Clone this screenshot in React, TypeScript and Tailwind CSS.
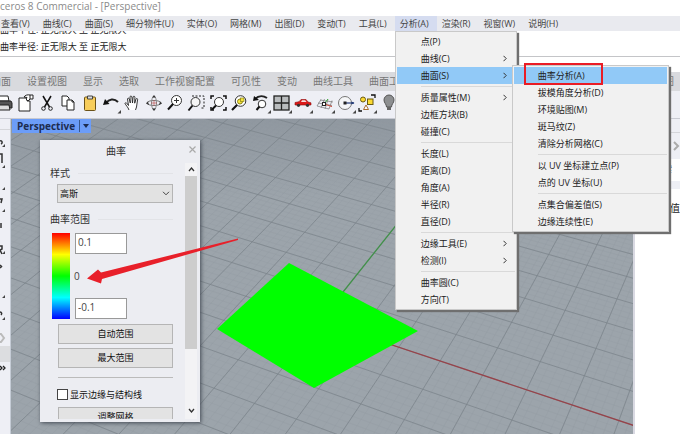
import { Fragment, type ReactNode } from "react";
import { clsx } from "clsx";

type MenuEntry = { label: string; sub?: boolean; children?: MenuEntry[][]; marked?: boolean };

const MENUS = [
  "查看(V)", "曲线(C)", "曲面(S)", "细分物件(U)", "实体(O)", "网格(M)", "出图(D)",
  "变动(T)", "工具(L)", "分析(A)", "渲染(R)", "视窗(W)", "说明(H)",
];

const SURFACE_MENU: MenuEntry[][] = [
  [
    { label: "曲率分析(A)", marked: true },
    { label: "拔模角度分析(D)" },
    { label: "环境贴图(M)" },
    { label: "斑马纹(Z)" },
    { label: "清除分析网格(C)" },
  ],
  [{ label: "以 UV 坐标建立点(P)" }, { label: "点的 UV 坐标(U)" }],
  [{ label: "点集合偏差值(S)" }, { label: "边缘连续性(E)" }],
];

const ANALYZE_MENU: MenuEntry[][] = [
  [{ label: "点(P)" }, { label: "曲线(C)", sub: true }, { label: "曲面(S)", sub: true, children: SURFACE_MENU }],
  [{ label: "质量属性(M)", sub: true }, { label: "边框方块(B)" }, { label: "碰撞(C)" }],
  [{ label: "长度(L)" }, { label: "距离(D)" }, { label: "角度(A)" }, { label: "半径(R)" }, { label: "直径(D)" }],
  [{ label: "边缘工具(E)", sub: true }, { label: "检测(I)", sub: true }],
  [{ label: "曲率圆(C)" }, { label: "方向(T)" }],
];

const TABS = ["曲面", "设置视图", "显示", "选取", "工作视窗配置", "可见性", "变动", "曲线工具", "曲面工具"];

function Menu({ groups, className }: { groups: MenuEntry[][]; className: string }) {
  return (
    <div
      role="menu"
      className={clsx(
        "absolute z-20 border border-[#c9c9c9] bg-[#f1f1f1] p-px shadow-[2px_2px_1px_#6f6f6f]",
        className
      )}
    >
      {groups.map((group, i) => (
        <Fragment key={i}>
          {i > 0 && <div className="my-[2px] ml-6 h-px bg-[#d9d9d9]" />}
          {group.map((item) => (
            <div key={item.label} className="relative">
              <button
                role="menuitem"
                className={clsx(
                  "flex h-[17px] w-full items-center justify-between pr-2 pl-6 whitespace-nowrap text-[#222]",
                  (item.children || item.marked) && "bg-[#91c9f7]"
                )}
              >
                {item.label}
                {item.sub && (
                  <svg width="4" height="7" viewBox="0 0 4 7" fill="none" stroke="#333">
                    <path d="M.5 .8 3.2 3.5 .5 6.2" />
                  </svg>
                )}
              </button>
              {item.marked && (
                <div className="pointer-events-none absolute -top-[4px] left-[10px] h-[22px] w-[79px] border-2 border-[#ea1c25]" />
              )}
              {item.children && <Menu groups={item.children} className="-top-[2px] left-[115px] w-[157px]" />}
            </div>
          ))}
        </Fragment>
      ))}
    </div>
  );
}

/* Toolbar icons, all on a 20x20 grid */
const TOOLS: { name: string; flyout?: boolean; icon: ReactNode }[] = [
  {
    name: "Print",
    icon: (
      <>
        <path d="M5 3h9l1 5H4z" fill="#fff" stroke="#222" />
        <path d="M2 8h15l1 2v5H2z" fill="#555" stroke="#222" />
        <path d="M5 12h10l1 5H4z" fill="#ddd" stroke="#222" />
      </>
    ),
  },
  {
    name: "Properties",
    icon: (
      <>
        <path d="M4 5h8v3h3v10H4z" fill="#fff" stroke="#222" />
        <path d="M9 4c1-2 4-2.500 6-2h3v4h-3l-2 2-2-2 1-1.500z" fill="#fff" stroke="#222" />
        <path d="M15 2v4" stroke="#222" />
      </>
    ),
  },
  {
    name: "Cut",
    icon: (
      <>
        <path d="M6 3l6.500 11M14 3 7.500 14" stroke="#111" strokeWidth="1.500" />
        <circle cx="6.500" cy="15.500" r="1.800" stroke="#222" />
        <circle cx="13.500" cy="15.500" r="1.800" stroke="#222" />
      </>
    ),
  },
  {
    name: "Copy",
    icon: (
      <>
        <path d="M4 3h5l2 2v8H4z" fill="#fff" stroke="#222" />
        <path d="M9 7h5l2 2v8H9z" fill="#fff" stroke="#222" />
        <path d="M14 7v2h2" stroke="#222" />
      </>
    ),
  },
  {
    name: "Paste",
    icon: (
      <>
        <rect x="4.500" y="4" width="11" height="13.500" rx="1" fill="#f7cd5b" stroke="#6b5219" />
        <path d="M7.500 3h5v3h-5z" fill="#ddd" stroke="#444" />
      </>
    ),
  },
  {
    name: "Undo",
    flyout: true,
    icon: (
      <>
        <path d="M5 10c3-4 8-5 12-1" stroke="#222" strokeWidth="2" />
        <path d="M2 12 4 6l4.500 5z" fill="#111" />
      </>
    ),
  },
  {
    name: "Pan",
    icon: (
      <path
        d="M7 17c-1-3-3-4.500-4-6.500 0-1 1.500-1 2 0l1.500 2L5.500 6c0-1 1.500-1.300 1.800 0l1 4L8 4c0-1.300 1.700-1.300 1.900 0l.6 6 .6-6c.2-1.200 1.700-1 1.800.2l-.2 6 1.300-4.200c.5-1 1.800-.5 1.600.5L14.500 14l-1 3"
        fill="#fff"
        stroke="#222"
        strokeWidth=".9"
      />
    ),
  },
  {
    name: "Rotate View",
    icon: (
      <>
        <ellipse cx="10" cy="10" rx="7" ry="2.500" stroke="#777" />
        <ellipse cx="10" cy="10" rx="2.500" ry="6.500" stroke="#888" />
        <path d="M8 4.500 10 2l2 2.500zM8 15.500l2 2.500 2-2.500zM4 8.500 2 10.500l3 1.500zM16 8.500l2 2-3 1.500z" fill="#333" />
        <path d="M10 7v6M7 10h6" stroke="#b55" strokeWidth=".7" />
      </>
    ),
  },
  {
    name: "Zoom Dynamic",
    icon: (
      <>
        <circle cx="11.500" cy="7.500" r="5" fill="#fff" stroke="#333" />
        <path d="M9 7.500h5M11.500 5v5" stroke="#333" />
        <path d="m8 11-5 5.500" stroke="#111" strokeWidth="2" />
      </>
    ),
  },
  {
    name: "Zoom Window",
    icon: (
      <>
        <path d="M6 3h12v12h-3" stroke="#222" strokeDasharray="2 1.500" />
        <circle cx="9.500" cy="9" r="4.500" fill="#f5f5f5" stroke="#333" />
        <path d="m6.500 12.500-4 5" stroke="#111" strokeWidth="2" />
      </>
    ),
  },
  {
    name: "Zoom Extents",
    icon: (
      <>
        <path d="M3 6V3h3M15 3h3v3M18 14v3h-3M6 17H3v-3" stroke="#111" strokeWidth="1.500" />
        <circle cx="11" cy="9" r="4.500" fill="#fff" stroke="#333" />
        <path d="m8 12.500-4 4" stroke="#111" strokeWidth="2" />
      </>
    ),
  },
  {
    name: "Zoom Selected",
    icon: (
      <>
        <circle cx="11.500" cy="8" r="5.300" fill="#fff" stroke="#333" />
        <circle cx="11" cy="8.500" r="2.500" fill="#f5e53c" stroke="#8a8018" />
        <rect x="11.500" y="5" width="3.500" height="3.500" fill="#f5e53c" stroke="#8a8018" strokeWidth=".7" />
        <path d="m8 12-5 5" stroke="#111" strokeWidth="2.200" />
      </>
    ),
  },
  {
    name: "Undo View Change",
    flyout: true,
    icon: (
      <>
        <path d="M4 6c4-4 9-3 12-1" stroke="#222" strokeWidth="2" />
        <path d="M2 8 3 3l5 4z" fill="#111" />
        <circle cx="11" cy="11" r="3.800" fill="#fff" stroke="#333" />
        <path d="m8.500 13.500-3 3.500" stroke="#111" strokeWidth="2" />
      </>
    ),
  },
  {
    name: "4 Viewports",
    flyout: true,
    icon: (
      <>
        <rect x="2" y="3" width="15" height="14" fill="#b9bcbe" stroke="#222" strokeWidth="1.300" />
        <path d="M9.500 3v14M2 10h15" stroke="#222" strokeWidth="1.300" />
      </>
    ),
  },
  {
    name: "Named Views",
    flyout: true,
    icon: (
      <>
        <path d="M2 12V9.500l4-.8 2-2.200h5l2 2.500 3 .8V12z" fill="#dc1919" stroke="#8e0c0c" strokeWidth=".6" />
        <path d="M8 9l1-1.700h3.200L13.500 9z" fill="#f3dede" />
        <circle cx="5.500" cy="12.300" r="1.600" fill="#333" />
        <circle cx="14.500" cy="12.300" r="1.600" fill="#333" />
      </>
    ),
  },
  {
    name: "Set CPlane",
    flyout: true,
    icon: (
      <>
        <path d="M6 6.500 2 13M9.500 6 6 15M13 6.500 10 16M17 7.500l-3 8.500M5 7l13 2M3 10l14 2.500M2 13l12 3" stroke="#777" strokeWidth=".7" />
        <path d="m9 11 8 2.500" stroke="#c43" />
        <path d="m9 11 4-5" stroke="#3a3" />
        <rect x="7.500" y="9.500" width="3" height="3" fill="#fff" stroke="#222" />
      </>
    ),
  },
  {
    name: "Object Snap",
    flyout: true,
    icon: (
      <>
        <circle cx="9" cy="10" r="6.500" fill="#f5f6f8" stroke="#777" />
        <path d="M9 10h9" stroke="#223a77" strokeWidth="1.200" />
        <rect x="7.500" y="8.500" width="3" height="3" fill="#222" />
        <path d="m15.500 8.500 3 1.500-3 1.500z" fill="#223a77" />
      </>
    ),
  },
  {
    name: "Select",
    flyout: true,
    icon: (
      <>
        <path d="M14 2h4v3M2 15v3h3" stroke="#111" strokeWidth="1.300" />
        <circle cx="6" cy="6.500" r="2.500" fill="#fbd932" stroke="#6b5b13" />
        <rect x="10.500" y="6" width="5.500" height="5.500" fill="#fbd932" stroke="#6b5b13" />
        <path d="m9 12 2.500 4.500h-5z" fill="#fff" stroke="#a86a2c" />
      </>
    ),
  },
  {
    name: "Light",
    icon: (
      <>
        <path d="M5 7a5 5 0 0 1 10 0c0 3-2.500 4-2.500 7h-5C7.500 11 5 10 5 7z" fill="#8d8f91" stroke="#555" />
        <path d="M8 14h4v3H8z" fill="#666" />
      </>
    ),
  },
];

/* Ground plane: unit square (s, t) mapped onto the picture plane */
function project(u: number, v: number) {
  const s = (u + 3) / 6;
  const t = v / 4;
  const w = 1 - 0.09 * s + 0.128 * t;
  return `${((200.5 * s + 119.9 * t + 320) / w).toFixed(1)} ${((47.5 * s - 58.2 * t + 321) / w).toFixed(1)}`;
}

function gridPath(step: number) {
  let d = "";
  for (let u = -22; u <= 10; u += step) d += `M${project(u, -10)}L${project(u, 22)}`;
  for (let v = -10; v <= 22; v += step) d += `M${project(-22, v)}L${project(10, v)}`;
  return d;
}

function GroundPlane() {
  return (
    <svg className="absolute inset-0 h-full w-full" fill="none" aria-hidden="true">
      <g transform="translate(-11 -119)">
        <path d={gridPath(0.2)} stroke="#8f979e" strokeWidth=".5" opacity=".5" />
        <path d={gridPath(1)} stroke="#7b838a" strokeWidth=".9" opacity=".8" />
        <path d={`M${project(-3, 0)}L${project(10, 0)}`} stroke="#97434a" strokeWidth="1.300" />
        <path d={`M${project(-3, 0)}L${project(-3, 22)}`} stroke="#42914a" strokeWidth="1.300" />
        <path d="M289 263 418 331 314 388 217 329z" fill="#00ff00" />
      </g>
    </svg>
  );
}

function CurvatureDialog() {
  return (
    <section className="absolute top-[21px] left-[29px] flex h-[282px] w-[160px] flex-col bg-[#ecedf2] pb-[3px] shadow-[1px_1px_4px_#444b55]">
      <header className="relative flex h-[23px] shrink-0 items-center justify-center text-[10px] text-[#333]">
        <h2 className="pr-2">曲率</h2>
        <button aria-label="Close" className="absolute top-[6px] right-1">
          <svg width="7" height="7" viewBox="0 0 7 7" stroke="#aaa" strokeWidth="1.200">
            <path d="m.5.5 6 6m0-6-6 6" />
          </svg>
        </button>
      </header>

      <div className="flex min-h-0 flex-1">
        <div className="flex-1 overflow-hidden pr-3 pl-[10px]">
          <label htmlFor="style" className="flex h-[21px] items-center gap-2 text-[10px] text-[#333]">
            样式 <span className="h-px flex-1 bg-[#e2e3e7]" />
          </label>
          <div className="relative ml-[7px]">
            <select
              id="style"
              className="h-[19px] w-full appearance-none border border-[#b5b5b5] bg-[#e2e2e2] px-[2px] text-[9px] text-[#111]"
            >
              <option>高斯</option>
            </select>
            <svg className="pointer-events-none absolute top-[7px] right-[3px]" width="8" height="5" viewBox="0 0 8 5" fill="none" stroke="#444">
              <path d="m1 .8 3 3 3-3" />
            </svg>
          </div>

          <h3 className="mt-1 mb-px flex h-6 items-center gap-2 text-[10px] text-[#333]">
            曲率范围 <span className="h-px flex-1 bg-[#e2e3e7]" />
          </h3>
          <div className="ml-[2px] flex h-[88px] gap-1 pt-px">
            <div className="h-[86px] w-[18px] bg-[linear-gradient(#ff0000,#ffff00_25%,#00ff00_50%,#00ffff_75%,#0000ff)]" />
            <div className="flex h-[86px] flex-col items-start justify-between text-[10px] text-[#444]">
              <input
                aria-label="最大值"
                defaultValue="0.1"
                className="ml-px h-[21px] w-[52px] border border-[#999] bg-white px-[2px] pb-1"
              />
              <span>0</span>
              <input
                aria-label="最小值"
                defaultValue="-0.1"
                className="ml-px h-[21px] w-[52px] border border-[#999] bg-white px-[2px] pb-1"
              />
            </div>
          </div>

          <div className="ml-2 flex flex-col gap-1 pt-1 text-[9px] text-[#111]">
            <button className="h-5 border border-[#b5b5b5] bg-[#e3e3e3]">自动范围</button>
            <button className="h-5 border border-[#b5b5b5] bg-[#e3e3e3]">最大范围</button>
            <div className="mt-[5px] h-px bg-[#bbb]" />
            <label className="mt-1 -ml-px flex h-[17px] items-center gap-[2px] whitespace-nowrap">
              <input type="checkbox" className="h-[11px] w-[11px] appearance-none border border-[#444] bg-white" />
              显示边缘与结构线
            </label>
            <button className="h-5 border border-[#b5b5b5] bg-[#e3e3e3]">调整网格</button>
          </div>
        </div>

        {/* Scrollbar */}
        <div className="mr-[3px] flex w-3 flex-col items-center bg-[#f3f3f5]">
          <svg className="my-1" width="7" height="5" viewBox="0 0 7 5" fill="none" stroke="#333" strokeWidth="1.300">
            <path d="m1 4 2.500-3L6 4" />
          </svg>
          <div className="h-[173px] w-full bg-[#cdcdcd]" />
          <svg className="mt-auto mb-[6px]" width="7" height="5" viewBox="0 0 7 5" fill="none" stroke="#333" strokeWidth="1.300">
            <path d="m1 1 2.500 3L6 1" />
          </svg>
        </div>
      </div>
    </section>
  );
}

export default function App() {
  return (
    <div className="flex min-h-screen flex-col overflow-hidden bg-white font-['Open_Sans','Noto_Sans_CJK_SC',sans-serif] text-[9px] text-[#333]">
      <header className="flex h-4 items-start overflow-hidden text-[10px] leading-[13px] whitespace-nowrap text-[#8a8a8a]">
        <h1>ceros 8 Commercial - [Perspective]</h1>
      </header>

      <nav className="z-10 flex h-[15px] bg-[#e9eaef] text-[#444]">
        <div className="-ml-1 flex">
          {MENUS.map((name) => (
            <div key={name} className="relative">
              <button
                className={clsx("h-[15px] pr-2 pl-[5px] whitespace-nowrap", name === "分析(A)" && "bg-[#d5dcf0]")}
              >
                {name}
              </button>
              {name === "分析(A)" && <Menu groups={ANALYZE_MENU} className="top-full left-0 w-[122px]" />}
            </div>
          ))}
        </div>
      </nav>

      <div className="flex h-[26px] flex-col justify-end overflow-hidden border-b border-[#c4c5c8] pb-px leading-[17px] whitespace-nowrap text-[#222]">
        <p>曲率半径: 正无限大 至 正无限大</p>
        <p>曲率半径: 正无限大 至 正无限大</p>
      </div>
      <div className="h-[15px]" />

      <div className="flex h-[19px] items-center justify-between overflow-hidden bg-[#d9dade] text-[10px] whitespace-nowrap text-[#777]">
        <div className="-ml-[9px] flex gap-4">
          {TABS.map((tab) => (
            <button key={tab}>{tab}</button>
          ))}
        </div>
        <button className="pr-[6px]">贴图</button>
      </div>

      <div className="flex h-7 overflow-hidden border-b border-[#c8cad2] bg-[#eeeff5]">
        <div className="-ml-[6px] flex w-[405px] shrink-0 justify-between">
          {TOOLS.map((tool) => (
            <button key={tool.name} aria-label={tool.name} className="shrink-0">
              <svg width="20" height="24" viewBox="0 0 20 24" fill="none">
                {tool.icon}
                {tool.flyout && <path d="M20 17v3.500h-3.500z" fill="#444" />}
              </svg>
            </button>
          ))}
        </div>
      </div>

      <main className="flex flex-1">
        <aside className="flex w-[11px] shrink-0 flex-col border-r border-[#c5ccd6] bg-[#eeeff5]">
          <div className="mt-[10px] border-t border-[#d5d6da]" />
          {/* Right edge of the docked tool column */}
          <svg width="6" height="200" viewBox="0 0 6 200" fill="none" stroke="#333" strokeWidth="1.500">
            <path d="M0 11c2-1 3 2 1 3M0 24h2v9M0 69h2l-1 4M1 93v5M0 116h2v3l-2 1 2 4M0 135l1.500 1.500L0 138M0 182c2 0 2 2 1 3" />
            <path
              d="M5 14v3H2zM5 35v3H2zM5 57v3H2zM5 79v3H2zM5 121v3H2zM5 165v3H2zM5 187v3H2z"
              fill="#444"
              stroke="none"
            />
          </svg>
          <svg width="8" height="16" viewBox="0 0 8 16" fill="none" stroke="#bbb" strokeWidth="2">
            <path d="M-2 4h3l3 4-3 4h-3" />
          </svg>
          <div className="h-4 bg-[#dcdde0]" />
          <svg className="mt-[3px]" width="8" height="8" viewBox="0 0 8 8" fill="none" stroke="#222" strokeWidth="1.300">
            <path d="m0 1 2 2-2 2m3-4 2 2-2 2" />
          </svg>
        </aside>

        <div className="relative min-w-0 flex-1 overflow-hidden bg-[#9ca4ab] bg-[linear-gradient(#9098a0,#9ca4ab_25%)]">
          <GroundPlane />
          <button className="absolute top-0 left-px flex h-[14px] items-center bg-[#6c9df8] pl-[5px] text-[10px] font-bold text-[#1c2c50]">
            Perspective
            <span className="mr-px ml-1 h-3 w-px bg-[#39598f]" />
            <svg className="mx-[2px]" width="6" height="4" viewBox="0 0 6 4">
              <path d="M0 0h6L3 4z" fill="#1c2c50" />
            </svg>
          </button>
          <CurvatureDialog />
          <svg className="pointer-events-none absolute top-[115px] left-[73px]" width="160" height="56" viewBox="0 0 160 56" aria-hidden="true">
            <path d="M154 4.500 17 38.500 14 35.500 3 44.500 17 49.500 18 45 154 6z" fill="#e8202a" />
          </svg>
        </div>

        <aside className="flex w-[47px] shrink-0 flex-col border-l-2 border-[#d9d9e2] text-right whitespace-nowrap">
          <div className="h-[14px] border-b border-[#d4d5da] bg-[#eeeff5]" />
          <div className="flex h-[26px] items-center justify-end bg-[#eeeff5]">
            <svg width="7" height="10" viewBox="0 0 7 10" fill="none" stroke="#aaa" strokeWidth="2">
              <path d="m1 1 4 4-4 4" />
            </svg>
          </div>
          <div className="h-[22px] pr-2 leading-[20px]">搜索</div>
          <div className="h-2 bg-[#eeeff5]" />
          <div className="h-10 text-[10px] leading-[38px] text-[#222]">默认值</div>
        </aside>
      </main>
    </div>
  );
}
